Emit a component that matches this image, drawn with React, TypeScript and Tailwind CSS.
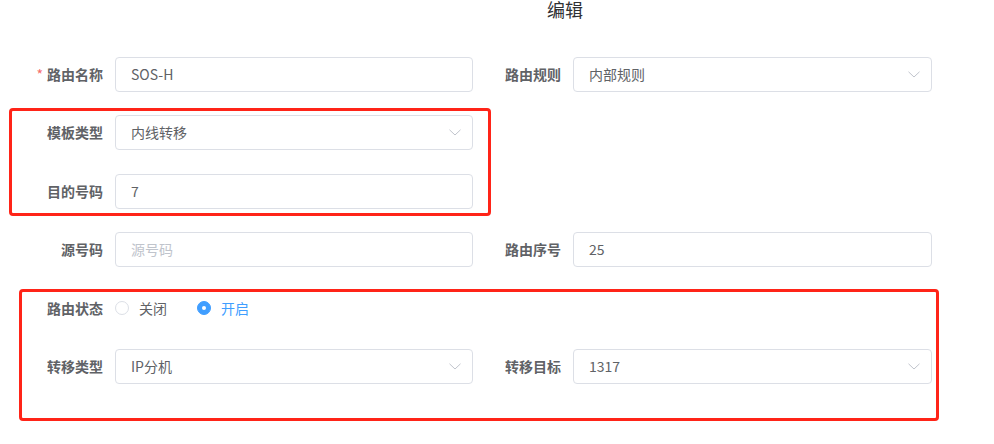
import { ReactNode } from "react";

const font = "font-['Microsoft_YaHei','Noto_Sans_CJK_SC',sans-serif]";

function Arrow() {
  return (
    <svg width="12" height="7" viewBox="0 0 12 7" className="shrink-0">
      <path d="M0.5 0.8 L6 6 L11.5 0.8" fill="none" stroke="#c0c4cc" strokeWidth="1" />
    </svg>
  );
}

function Field({ label, required, children }: { label: string; required?: boolean; children: ReactNode }) {
  return (
    <div className="flex items-center h-[35px]">
      <div className="w-[100px] pr-3 text-right text-[14px] font-bold text-[#606266] shrink-0">
        {required && <span className="text-[#f56c6c] mr-1 font-normal">*</span>}
        {label}
      </div>
      {children}
    </div>
  );
}

function Input({ value, placeholder, select }: { value?: string; placeholder?: string; select?: boolean }) {
  return (
    <div className="flex-1 h-[35px] border border-[#dcdfe6] rounded-[4px] bg-white flex items-center pl-[15px] pr-[11px] text-[14px]">
      <span className={value ? "flex-1 text-[#606266]" : "flex-1 text-[#c0c4cc]"}>{value || placeholder}</span>
      {select && <Arrow />}
    </div>
  );
}

function Radio({ label, checked }: { label: string; checked?: boolean }) {
  return (
    <label className="flex items-center">
      <span
        className={
          checked
            ? "w-[14px] h-[14px] rounded-full bg-[#409eff] border border-[#409eff] flex items-center justify-center"
            : "w-[14px] h-[14px] rounded-full bg-white border border-[#dcdfe6]"
        }
      >
        {checked && <span className="w-[4px] h-[4px] rounded-full bg-white" />}
      </span>
      <span className={checked ? "ml-[10px] text-[14px] text-[#409eff]" : "ml-[10px] text-[14px] text-[#606266]"}>{label}</span>
    </label>
  );
}

export default function App() {
  return (
    <div className={`relative w-[994px] h-[444px] bg-white overflow-hidden ${font}`}>
      <div className="pl-[547px] text-[18px] leading-[19px] text-[#303133]">编辑</div>

      <div className="ml-[15px] mt-[38px] grid grid-cols-[458px_459px] gap-y-[23.4px]">
        <Field label="路由名称" required>
          <Input value="SOS-H" />
        </Field>
        <Field label="路由规则">
          <Input value="内部规则" select />
        </Field>

        <Field label="模板类型">
          <Input value="内线转移" select />
        </Field>
        <div />

        <Field label="目的号码">
          <Input value="7" />
        </Field>
        <div />

        <Field label="源号码">
          <Input placeholder="源号码" />
        </Field>
        <Field label="路由序号">
          <Input value="25" />
        </Field>

        <Field label="路由状态">
          <div className="flex items-center gap-[30px]">
            <Radio label="关闭" />
            <Radio label="开启" checked />
          </div>
        </Field>
        <div />

        <Field label="转移类型">
          <Input value="IP分机" select />
        </Field>
        <Field label="转移目标">
          <Input value="1317" select />
        </Field>
      </div>

      {/* annotation boxes */}
      <div className="absolute left-[9px] top-[108px] w-[482px] h-[108px] border-[3px] border-[#ff2418] rounded-[4px] pointer-events-none" />
      <div className="absolute left-[19px] top-[289px] w-[920px] h-[132px] border-[3px] border-[#ff2418] rounded-[4px] pointer-events-none" />
    </div>
  );
}
